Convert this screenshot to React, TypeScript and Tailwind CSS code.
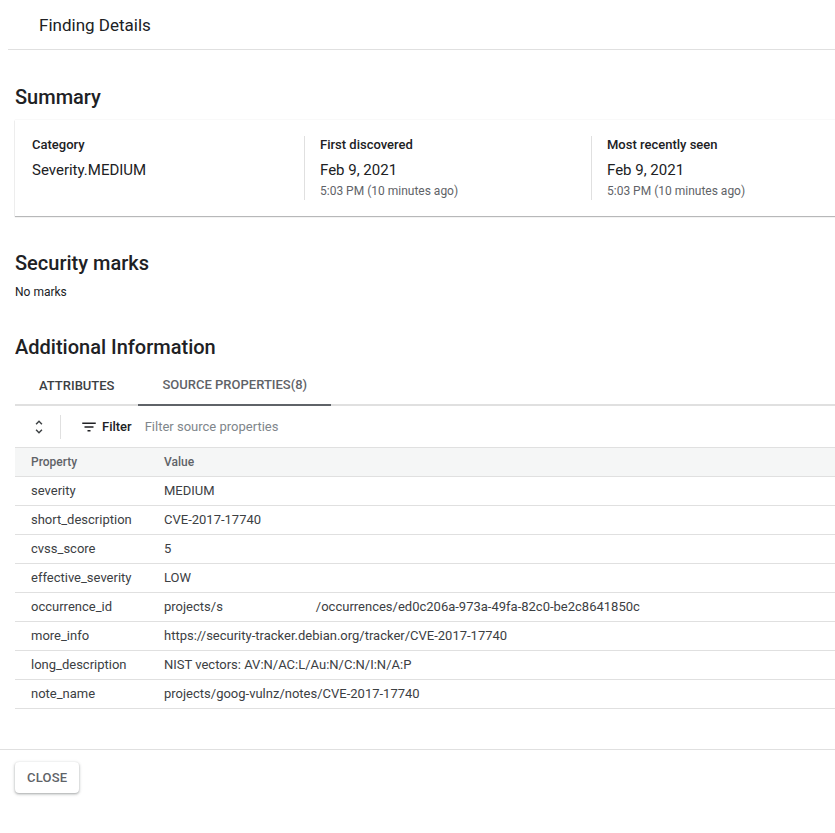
export default function App() {
  const rows = [
    ["severity", "MEDIUM"],
    ["short_description", "CVE-2017-17740"],
    ["cvss_score", "5"],
    ["effective_severity", "LOW"],
    ["occurrence_id", "__occ__"],
    ["more_info", "https://security-tracker.debian.org/tracker/CVE-2017-17740"],
    ["long_description", "NIST vectors: AV:N/AC:L/Au:N/C:N/I:N/A:P"],
    ["note_name", "projects/goog-vulnz/notes/CVE-2017-17740"],
  ]

  return (
    <div
      className="w-full min-h-[833px] overflow-hidden bg-white text-[#202124]"
      style={{ fontFamily: "Roboto, 'Noto Sans', sans-serif" }}
    >
      <div className="w-[920px]">
        {/* dialog title */}
        <div className="ml-2 flex h-[50px] items-center border-b border-[#e0e0e0] pl-[31px] pt-[3px] text-[17px]">
          Finding Details
        </div>

        <div className="px-[15px]">
          {/* summary */}
          <h2 className="mt-[33px] text-[20px] font-medium leading-7">Summary</h2>
          <div className="mt-[9px] flex py-4 shadow-[0_1px_1px_0_rgba(60,64,67,0.35),0_0_1px_0_rgba(60,64,67,0.2)]">
            <div className="w-[289px] pl-[17px]">
              <div className="text-[13px] font-medium leading-[18px]">Category</div>
              <div className="mt-[6px] text-[15px] leading-5">Severity.MEDIUM</div>
            </div>
            <div className="w-[287px] border-l border-[#e0e0e0] pl-[15px]">
              <div className="text-[13px] font-medium leading-[18px]">First discovered</div>
              <div className="mt-[6px] text-[15px] leading-5">Feb 9, 2021</div>
              <div className="mt-[3px] text-[12px] leading-[17px] text-[#5f6368]">5:03 PM (10 minutes ago)</div>
            </div>
            <div className="w-[287px] border-l border-[#e0e0e0] pl-[15px]">
              <div className="text-[13px] font-medium leading-[18px]">Most recently seen</div>
              <div className="mt-[6px] text-[15px] leading-5">Feb 9, 2021</div>
              <div className="mt-[3px] text-[12px] leading-[17px] text-[#5f6368]">5:03 PM (10 minutes ago)</div>
            </div>
          </div>

          {/* security marks */}
          <h2 className="mt-[33px] text-[20px] font-medium leading-7">Security marks</h2>
          <div className="mt-[7px] text-[12px] leading-4">No marks</div>

          {/* additional info */}
          <h2 className="mt-[33px] text-[20px] font-medium leading-7">Additional Information</h2>
          <div className="mt-[4px] flex h-[41px] border-b-2 border-[#e0e0e0]">
            <div className="-mb-[2px] flex items-center px-6 text-[13px] font-medium text-[#3c4043]">ATTRIBUTES</div>
            <div className="-mb-[2px] flex items-center border-b-2 border-[#5f6368] px-6 text-[13px] font-medium text-[#5f6368]">
              SOURCE PROPERTIES(8)
            </div>
          </div>

          {/* toolbar */}
          <div className="flex h-[41px] items-center">
            <div className="w-[45px]">
              <svg width="18" height="18" viewBox="0 0 24 24" fill="#3c4043" className="ml-[15px]">
                <path d="M12 5.83L15.17 9l1.41-1.41L12 3 7.41 7.59 8.83 9 12 5.83zm0 12.34L8.83 15l-1.41 1.41L12 21l4.59-4.59L15.17 15 12 18.17z" />
              </svg>
            </div>
            <div className="h-[24px] w-px bg-[#e0e0e0]" />
            <svg width="18" height="18" viewBox="0 0 24 24" fill="#202124" className="ml-[19px]">
              <path d="M10 18h4v-2h-4v2zM3 6v2h18V6H3zm3 7h12v-2H6v2z" />
            </svg>
            <span className="ml-[4px] text-[13px] font-medium">Filter</span>
            <span className="ml-[13px] text-[13px] text-[#80868b]">Filter source properties</span>
          </div>

          {/* table */}
          <div className="flex h-[29px] items-center border-t border-[#e0e0e0] bg-[#f5f6f6] text-[12px] font-medium text-[#5f6368]">
            <div className="w-[149px] pl-4">Property</div>
            <div>Value</div>
          </div>
          {rows.map(([k, v]) => (
            <div key={k} className="flex h-[29px] items-center border-t border-[#e0e0e0] text-[13px] text-[#3c4043]">
              <div className="w-[149px] pl-4">{k}</div>
              <div className="whitespace-nowrap">
                {v === "__occ__" ? (
                  <>
                    <span>projects/s</span>
                    <span className="inline-block w-[93px]" />
                    <span>/occurrences/ed0c206a-973a-49fa-82c0-be2c8641850c</span>
                  </>
                ) : (
                  v
                )}
              </div>
            </div>
          ))}
          <div className="border-t border-[#e0e0e0]" />
        </div>

        {/* footer */}
        <div className="mt-[40px] border-t border-[#e0e0e0] px-[15px] pt-[12px]">
          <button className="h-[31px] rounded px-3 text-[13px] font-medium tracking-[0.2px] text-[#5f6368] shadow-[0_1px_2px_0_rgba(60,64,67,0.3),0_1px_3px_1px_rgba(60,64,67,0.15)]">
            CLOSE
          </button>
        </div>
      </div>
    </div>
  )
}
